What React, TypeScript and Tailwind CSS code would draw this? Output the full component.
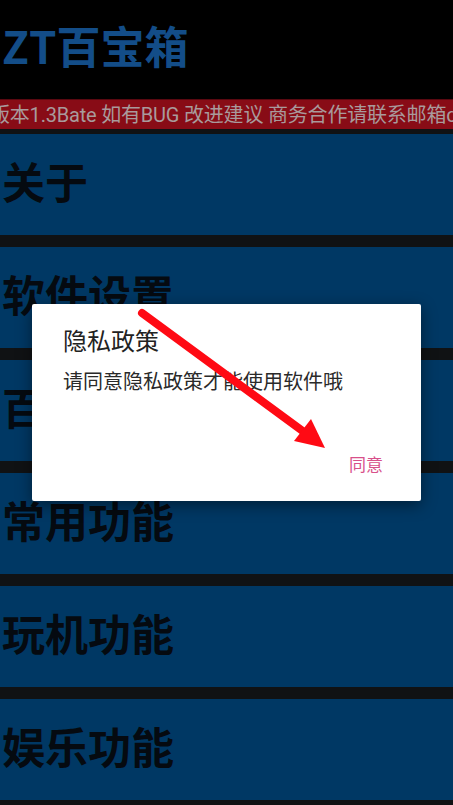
import React from "react";

const rows = ["关于", "软件设置", "百宝箱功能", "常用功能", "玩机功能", "娱乐功能"];

const cjk = { fontFamily: '"Noto Sans CJK SC", "Noto Sans", sans-serif' };
const latinFirst = { fontFamily: 'Roboto, "Noto Sans CJK SC", sans-serif' };

export default function App() {
  return (
    <div className="relative w-[453px] h-[805px] overflow-hidden bg-[#101214]" style={cjk}>
      {/* header */}
      <div className="h-[99px] bg-black flex items-center pb-[9px]">
        <h1 className="pl-[2px] text-[44px] leading-none font-bold text-[#134d88]">ZT百宝箱</h1>
      </div>

      {/* marquee */}
      <div className="h-[30px] bg-[#880c16] border-t border-[#5a0810] flex items-center overflow-hidden">
        <p className="-ml-[10px] whitespace-nowrap text-[20px] leading-none tracking-[-0.2px] text-[#a99a9c]" style={latinFirst}>
          版本1.3Bate 如有BUG 改进建议 商务合作请联系邮箱q
        </p>
      </div>

      {/* menu list */}
      <div className="flex flex-col gap-[12px] pt-[5px]">
        {rows.map((r) => (
          <div key={r} className="h-[101px] bg-[#003864] flex items-center pb-[8px]">
            <span className="pl-[2px] text-[43px] leading-none font-bold text-[#050a10]">{r}</span>
          </div>
        ))}
      </div>

      {/* dialog */}
      <div className="absolute left-[32px] top-[304px] w-[389px] h-[197px] bg-white rounded-[2px] shadow-[0_4px_16px_rgba(0,0,0,0.45)] flex flex-col">
        <div className="pl-[31px] pt-[24px] text-[24px] leading-none text-[#222]">隐私政策</div>
        <div className="pl-[31px] pt-[19px] text-[20px] leading-none text-[#2a2a2a]">请同意隐私政策才能使用软件哦</div>
        <div className="mt-auto mb-[29px] pr-[38px] flex justify-end">
          <span className="text-[17px] leading-none text-[#d8508a]">同意</span>
        </div>
      </div>

      {/* red arrow annotation */}
      <svg className="absolute inset-0 pointer-events-none" width="453" height="805" viewBox="0 0 453 805">
        <line x1="142" y1="313" x2="304" y2="432" stroke="#ff0a14" strokeWidth="8" strokeLinecap="round" />
        <polygon points="325,448 294,441 311,419" fill="#ff0a14" />
      </svg>
    </div>
  );
}
